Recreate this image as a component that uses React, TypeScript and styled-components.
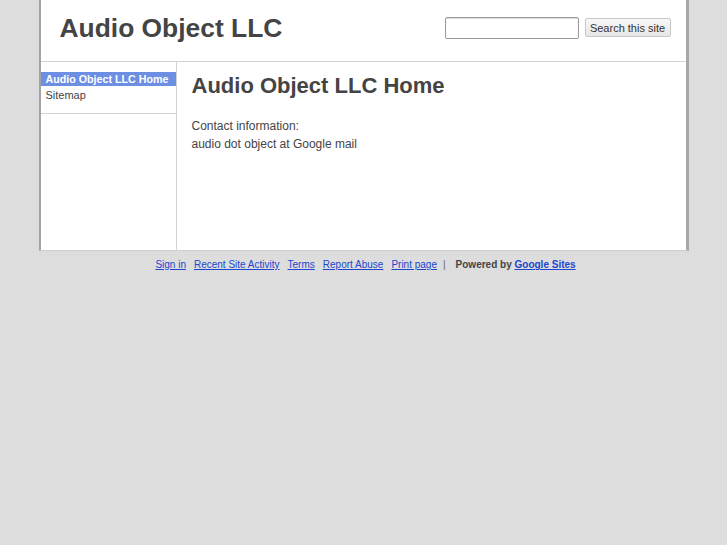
import React from 'react';
import styled, { createGlobalStyle } from 'styled-components';

const GlobalStyle = createGlobalStyle`
  body {
    margin: 0;
    background: #dddddd;
    font-family: "Liberation Sans", Arial, sans-serif;
    color: #444;
  }
`;

const Canvas = styled.div`
  width: 645px;
  margin: 0 auto;
  background: #fff;
  border-left: 2px solid #a3a3a3;
  border-right: 3px solid #a8a8a8;
  border-bottom: 1px solid #cfcfcf;
`;

const Header = styled.div`
  height: 61px;
  display: flex;
  align-items: center;
  justify-content: space-between;
  padding: 0 15px 0 19px;
  border-bottom: 1px solid #d4d4d4;
`;

const SiteTitle = styled.h1`
  margin: 0;
  font-size: 26.4px;
  font-weight: bold;
  color: #444;
  padding-bottom: 5px;
`;

const SearchForm = styled.form`
  display: flex;
  align-items: center;
  gap: 6px;
  padding-bottom: 6px;
`;

const SearchInput = styled.input`
  box-sizing: border-box;
  width: 134px;
  height: 22px;
  border: 1px solid #999;
  border-radius: 2px;
  box-shadow: inset 0 1px 1px #ddd;
  outline: none;
`;

const SearchButton = styled.button`
  box-sizing: border-box;
  width: 86px;
  height: 19px;
  padding: 0;
  font-family: "Liberation Sans", Arial, sans-serif;
  font-size: 11px;
  color: #333;
  background: linear-gradient(#f8f8f8, #e6e6e6);
  border: 1px solid #c8c8c8;
  border-radius: 2px;
`;

const Body = styled.div`
  display: flex;
  height: 188px;
`;

const Sidebar = styled.div`
  width: 135px;
  border-right: 1px solid #d4d4d4;
`;

const Nav = styled.ul`
  list-style: none;
  margin: 0;
  padding: 10px 0 10px;
  border-bottom: 1px solid #d4d4d4;
`;

const NavItem = styled.li<{ $active?: boolean }>`
  height: ${p => (p.$active ? '14px' : '17px')};
  line-height: ${p => (p.$active ? '14px' : '19px')};
  padding-left: 5px;
  font-size: ${p => (p.$active ? '10.7px' : '11px')};
  font-weight: ${p => (p.$active ? 'bold' : 'normal')};
  color: ${p => (p.$active ? '#fff' : '#444')};
  background: ${p => (p.$active ? '#6d8fe3' : 'transparent')};
  white-space: nowrap;
`;

const Main = styled.div`
  flex: 1;
  padding: 10px 15px;
`;

const PageTitle = styled.h2`
  margin: 0 0 17px;
  font-size: 22px;
  line-height: 28px;
  font-weight: bold;
  color: #444;
`;

const Text = styled.div`
  font-size: 12px;
  line-height: 18px;
  color: #444;
`;

const Footer = styled.div`
  text-align: center;
  font-size: 10px;
  padding-top: 8px;
  color: #444;
`;

const FooterLink = styled.a`
  color: #2046d0;
  text-decoration: underline;
  margin: 0 4px;
`;

const Sep = styled.span`
  margin: 0 10px 0 2px;
  color: #666;
`;

const Powered = styled.b`
  color: #444;
`;

const StrongLink = styled.a`
  color: #2046d0;
  font-weight: bold;
  text-decoration: underline;
`;

export default function App() {
  return (
    <>
      <GlobalStyle />
      <Canvas>
        <Header>
          <SiteTitle>Audio Object LLC</SiteTitle>
          <SearchForm onSubmit={e => e.preventDefault()}>
            <SearchInput />
            <SearchButton type="submit">Search this site</SearchButton>
          </SearchForm>
        </Header>
        <Body>
          <Sidebar>
            <Nav>
              <NavItem $active>Audio Object LLC Home</NavItem>
              <NavItem>Sitemap</NavItem>
            </Nav>
          </Sidebar>
          <Main>
            <PageTitle>Audio Object LLC Home</PageTitle>
            <Text>Contact information:</Text>
            <Text>audio dot object at Google mail</Text>
          </Main>
        </Body>
      </Canvas>
      <Footer>
        <FooterLink href="#">Sign in</FooterLink>
        <FooterLink href="#">Recent Site Activity</FooterLink>
        <FooterLink href="#">Terms</FooterLink>
        <FooterLink href="#">Report Abuse</FooterLink>
        <FooterLink href="#">Print page</FooterLink>
        <Sep>|</Sep>
        <Powered>Powered by </Powered>
        <StrongLink href="#">Google Sites</StrongLink>
      </Footer>
    </>
  );
}
